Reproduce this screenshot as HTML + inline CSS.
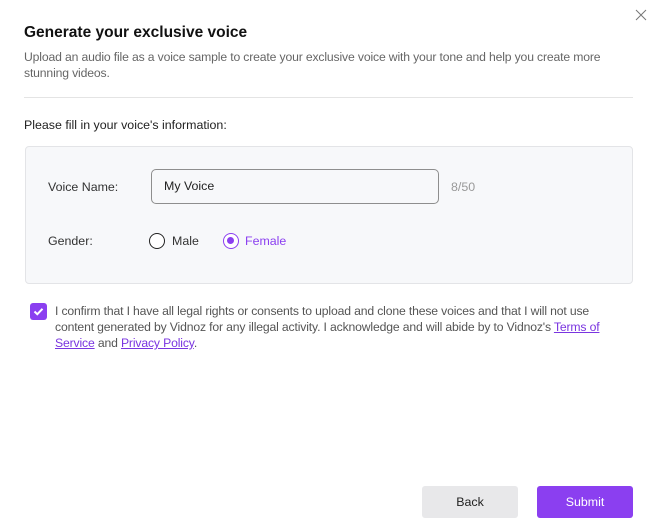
<!DOCTYPE html>
<html><head><style>
*{margin:0;padding:0;box-sizing:border-box}
body{width:652px;height:532px;background:#fff;font-family:"Liberation Sans",sans-serif;position:relative;overflow:hidden;color:#222}
.abs{position:absolute}
h1{position:absolute;left:24px;top:24px;font-size:15.5px;font-weight:bold;color:#111}
.sub{left:24px;top:49px;width:615px;font-size:12.2px;line-height:16px;color:#666;letter-spacing:-0.15px}
.hr{left:24px;top:97px;width:609px;height:1px;background:#e4e4e4}
.lbl{left:24px;top:118px;font-size:12.4px;color:#222}
.panel{left:25px;top:146px;width:608px;height:138px;background:#f7f8fa;border:1px solid #e3e4e7;border-radius:4px}
.t{font-size:12.4px;color:#333}
.input{left:151px;top:169px;width:288px;height:35px;border:1px solid #8e8e8e;border-radius:5px;background:#f7f8fa;font-size:12.4px;padding:9px 12px;color:#222}
.radio{width:16px;height:16px;border-radius:50%;border:1.5px solid #222;background:#fff}
.radio.on{border-color:#8b3ff0}
.radio.on::after{content:"";position:absolute;left:3px;top:3px;width:7px;height:7px;border-radius:50%;background:#8b3ff0}
.cb{left:30px;top:303px;width:17px;height:17px;border-radius:3px;background:#8b3ff0}
.conf{left:55px;top:303px;width:565px;font-size:12.2px;line-height:16px;color:#555;letter-spacing:-0.15px}
.conf a{color:#7a35e0;text-decoration:underline}
.btn{top:486px;height:32px;border-radius:3px;font-size:12.4px;text-align:center;line-height:32px}
</style></head><body>
<svg class="abs" style="left:635px;top:9px" width="12" height="12" viewBox="0 0 12 12"><path d="M1 1L11 11M11 1L1 11" stroke="#777" stroke-width="1"/></svg>
<h1>Generate your exclusive voice</h1>
<div class="abs sub">Upload an audio file as a voice sample to create your exclusive voice with your tone and help you create more stunning videos.</div>
<div class="abs hr"></div>
<div class="abs lbl">Please fill in your voice's information:</div>
<div class="abs panel"></div>
<div class="abs t" style="left:48px;top:180px">Voice Name:</div>
<div class="abs input">My Voice</div>
<div class="abs t" style="left:451px;top:180px;color:#999">8/50</div>
<div class="abs t" style="left:48px;top:234px">Gender:</div>
<div class="abs radio" style="left:149px;top:233px"></div>
<div class="abs t" style="left:172px;top:234px">Male</div>
<div class="abs radio on" style="left:223px;top:233px"></div>
<div class="abs t" style="left:245px;top:234px;color:#8b3ff0">Female</div>
<div class="abs cb"><svg width="17" height="17" viewBox="0 0 17 17"><path d="M4.5 8.5L7.3 11.2L12.5 5.8" stroke="#fff" stroke-width="2" fill="none"/></svg></div>
<div class="abs conf">I confirm that I have all legal rights or consents to upload and clone these voices and that I will not use content generated by Vidnoz for any illegal activity. I acknowledge and will abide by to Vidnoz's <a>Terms of</a><br><a>Service</a> and <a>Privacy Policy</a>.</div>
<div class="abs btn" style="left:422px;width:96px;background:#e8e8ea;color:#222">Back</div>
<div class="abs btn" style="left:537px;width:96px;background:#8b3ff0;color:#fff">Submit</div>
</body></html>
